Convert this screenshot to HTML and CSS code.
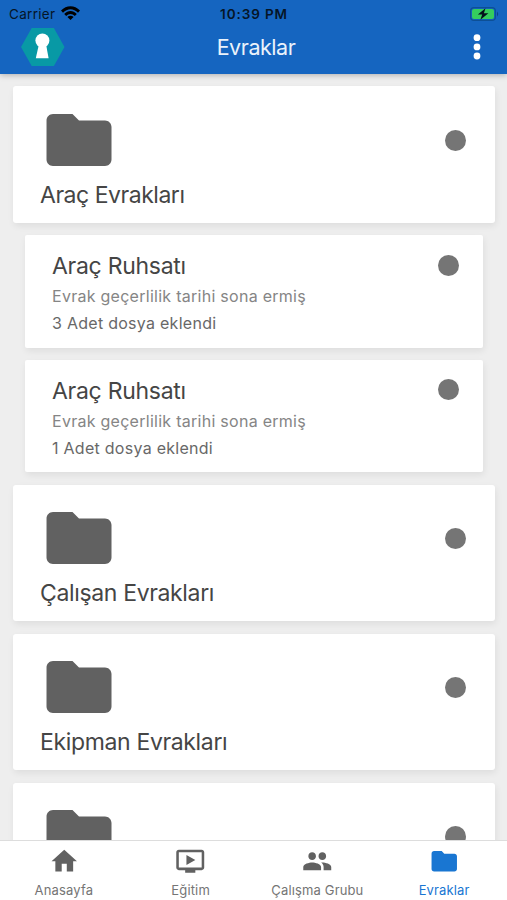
FILE: index.html
```html
<!DOCTYPE html>
<html lang="tr">
<head>
<meta charset="utf-8">
<title>Evraklar</title>
<link rel="stylesheet" href="styles.css">
</head>
<body>
<svg class="defs" aria-hidden="true">
  <symbol id="folder" viewBox="0 0 24 24"><path d="M10 4H4c-1.100 0-1.990.900-1.990 2L2 18c0 1.100.900 2 2 2h16c1.100 0 2-.900 2-2V8c0-1.100-.900-2-2-2h-8l-2-2z"/></symbol>
</svg>
<div class="app">
  <header class="header">
    <div class="status">
      <div class="status-left">
        <span class="carrier">Carrier</span>
        <svg class="wifi" viewBox="0 0 19 14"><path d="M0 4.600C5.400-1.300 13.600-1.300 19 4.600L17 6.700C12.700 2 6.300 2 2 6.700ZM3.200 8C6.800 4 12.200 4 15.800 8L13.800 10C11.300 7.300 7.700 7.300 5.200 10ZM6.400 11.100C8.200 9.300 10.800 9.300 12.600 11.100L9.500 14Z"/></svg>
      </div>
      <span class="clock">10:39 PM</span>
      <svg class="battery" viewBox="0 0 30 14">
        <rect x=".6" y=".6" width="24.800" height="12.800" rx="3.500" fill="none" stroke="#0d4f95" stroke-width="1.200"/>
        <rect x="2" y="2" width="22" height="10" rx="2" fill="#35cd5e"/>
        <path d="M27 4.500q2.400 2.500 0 5z" fill="#0d4485"/>
        <path d="M15.500 1.200 7.800 7.600h4.400L10.400 12.800 18.400 6.300h-4.500z" fill="#04101c"/>
      </svg>
    </div>
    <div class="toolbar">
      <svg class="logo" viewBox="0 0 44 38"><path fill="#0899a5" d="M10.700 0h22.200L43.500 19 32.900 38H10.700L0 19z"/><circle cx="21.400" cy="12.500" r="7" fill="#fff"/><path fill="#fff" d="M18 16h7l2.600 14.200H14.800z"/></svg>
      <h1 class="title">Evraklar</h1>
      <svg class="more" viewBox="0 0 8 26"><circle cx="4" cy="3.700" r="3.400"/><circle cx="4" cy="12.900" r="3.400"/><circle cx="4" cy="22" r="3.400"/></svg>
    </div>
  </header>
  <main class="list">
    <section class="card">
      <svg class="card-icon"><use href="#folder"/></svg>
      <h2 class="name tight">Araç Evrakları</h2>
      <span class="dot"></span>
    </section>
    <section class="card doc">
      <div class="info">
        <h2 class="name">Araç Ruhsatı</h2>
        <p class="note">Evrak geçerlilik tarihi sona ermiş</p>
        <p class="note count">3 Adet dosya eklendi</p>
      </div>
      <span class="dot"></span>
    </section>
    <section class="card doc">
      <div class="info">
        <h2 class="name">Araç Ruhsatı</h2>
        <p class="note">Evrak geçerlilik tarihi sona ermiş</p>
        <p class="note count">1 Adet dosya eklendi</p>
      </div>
      <span class="dot"></span>
    </section>
    <section class="card">
      <svg class="card-icon"><use href="#folder"/></svg>
      <h2 class="name">Çalışan Evrakları</h2>
      <span class="dot"></span>
    </section>
    <section class="card">
      <svg class="card-icon"><use href="#folder"/></svg>
      <h2 class="name">Ekipman Evrakları</h2>
      <span class="dot"></span>
    </section>
    <section class="card">
      <svg class="card-icon"><use href="#folder"/></svg>
      <span class="dot"></span>
    </section>
  </main>
  <nav class="tabs">
    <a class="tab"><svg viewBox="0 0 24 24"><path d="M10 20v-6h4v6h5v-8h3L12 3 2 12h3v8z"/></svg><span>Anasayfa</span></a>
    <a class="tab"><svg viewBox="0 0 24 24"><path d="M21 3H3c-1.110 0-2 .890-2 2v12c0 1.100.890 2 2 2h5v2h8v-2h5c1.100 0 1.990-.900 1.990-2L23 5c0-1.110-.900-2-2-2zm0 14H3V5h18v12zm-5-6-7 4V7z"/></svg><span>Eğitim</span></a>
    <a class="tab"><svg viewBox="0 0 24 24"><path d="M16 11c1.660 0 2.990-1.340 2.990-3S17.660 5 16 5s-3 1.340-3 3 1.340 3 3 3zm-8 0c1.660 0 2.990-1.340 2.990-3S9.660 5 8 5 5 6.340 5 8s1.340 3 3 3zm0 2c-2.330 0-7 1.170-7 3.500V19h14v-2.500c0-2.330-4.670-3.500-7-3.500zm8 0c-.290 0-.620.020-.970.050 1.160.840 1.970 1.970 1.970 3.450V19h6v-2.500c0-2.330-4.670-3.500-7-3.500z"/></svg><span>Çalışma Grubu</span></a>
    <a class="tab active"><svg viewBox="0 0 24 24"><use href="#folder"/></svg><span>Evraklar</span></a>
  </nav>
</div>
</body>
</html>
```
FILE: styles.css
```css
* { box-sizing: border-box; }
body { margin: 0; background: #eee; font-family: Inter, "Liberation Sans", sans-serif; }
h1, h2, p { margin: 0; font-weight: 400; }
svg { display: block; flex: none; }
.defs { position: absolute; width: 0; height: 0; }

.app { display: flex; flex-direction: column; height: 900px; overflow: hidden; }

.header { height: 74px; flex: none; background: #1565c0; box-shadow: 0 1px 6px rgba(0, 0, 0, .28); z-index: 1; }
.status { display: grid; grid-template-columns: 1fr auto 1fr; align-items: center; height: 28px; padding: 0 8px 0 9px; font-size: 13px; line-height: 28px; color: #051527; }
.status-left { display: flex; align-items: center; gap: 6px; }
.carrier { font-size: 13.500px; letter-spacing: .3px; }
.wifi { width: 19px; height: 14px; margin-top: -2px; }
.clock { font-size: 13.500px; font-weight: 600; letter-spacing: .9px; }
.battery { width: 30px; height: 14px; justify-self: end; margin-top: -1px; margin-right: -1px; }

.toolbar { display: grid; grid-template-columns: 1fr auto 1fr; align-items: center; height: 38px; padding: 0 26px 0 21px; }
.logo { width: 44px; height: 38px; }
.title { color: #eaf2fb; font-size: 21.5px; line-height: 38px; letter-spacing: -.45px; margin-left: 10px; }
.more { width: 8px; height: 26px; justify-self: end; fill: #fff; }

.list { flex: 1; min-height: 0; overflow: hidden; display: flex; flex-direction: column; gap: 12.3px; padding: 12.400px 12.500px 0 13px; }
.card { display: grid; grid-template-columns: 1fr 21px; align-items: start; align-content: start; flex: none; height: 136.700px; padding: 14.500px 28.500px 0 27px; background: #fff; border-radius: 3px; box-shadow: 1px 3px 7px rgba(0, 0, 0, .07); }
.card-icon { width: 78px; height: 78px; fill: #616161; }
.card .name { grid-column: 1; grid-row: 2; margin-top: 1px; }
.card .dot { grid-column: 2; grid-row: 1; margin-top: 29px; }
.dot { width: 21px; height: 21px; border-radius: 50%; background: #757575; }
.name { font-size: 23px; line-height: 31px; letter-spacing: -.35px; color: #454545; white-space: nowrap; }
.name.tight { letter-spacing: -.47px; }
.doc { height: 112.300px; margin: 0 12px; padding: 15px 24px 0 27px; border-radius: 2px; }
.doc .name { letter-spacing: -.28px; }
.doc .dot { margin-top: 4.500px; }
.note { font-size: 16px; line-height: 27px; letter-spacing: .27px; color: #858585; margin-top: .8px; }
.note.count { color: #686868; margin-top: 0; }

.tabs { display: grid; grid-template-columns: repeat(4, 1fr); flex: none; height: 60px; background: #fff; border-top: 1px solid #ddd; z-index: 1; }
.tab { display: flex; flex-direction: column; align-items: center; padding: 5px 0 0 1px; font-size: 13px; letter-spacing: .15px; color: #757575; white-space: nowrap; }
.tab svg { width: 30.500px; height: 30.500px; fill: #616161; }
.tab span { line-height: 18px; margin-top: 4.500px; }
.tab.active { color: #1976d2; }
.tab.active svg { fill: #1976d2; }
```
